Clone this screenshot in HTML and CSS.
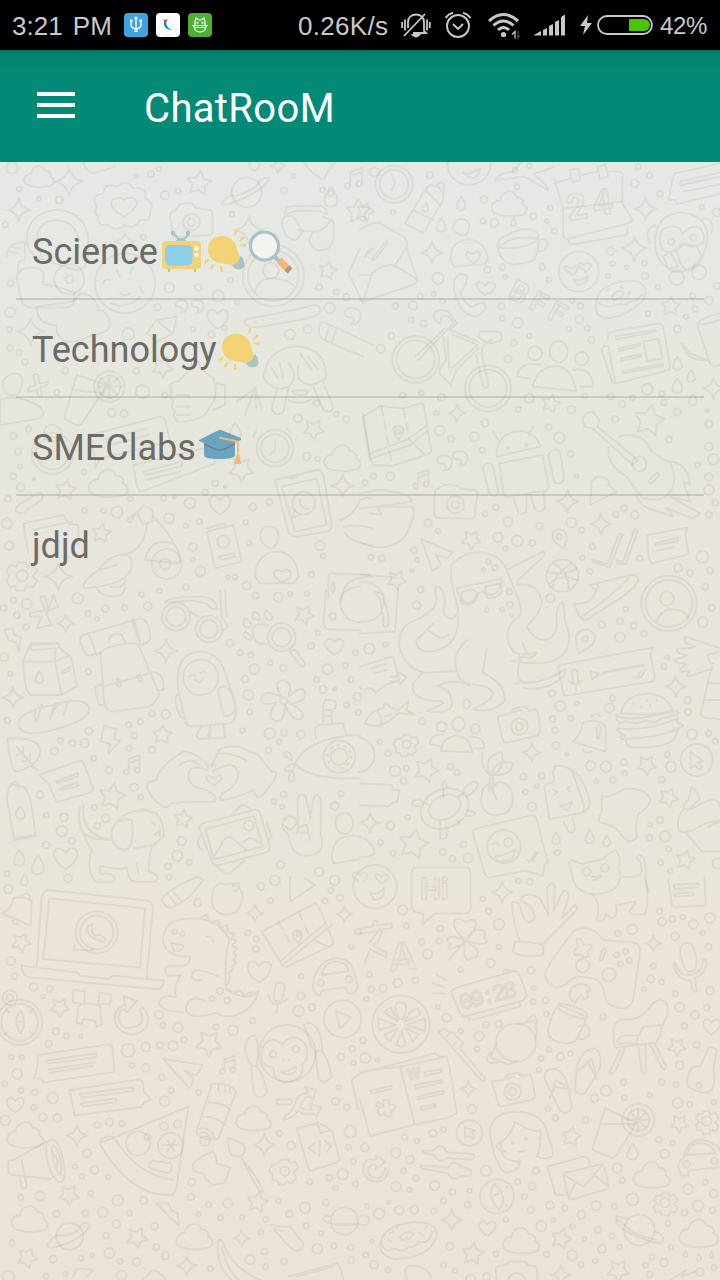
FILE: index.html
```html
<!DOCTYPE html>
<html lang="en">
<head>
<meta charset="utf-8">
<title>ChatRooM</title>
<link rel="stylesheet" href="styles.css">
</head>
<body>
<svg class="defs" width="0" height="0" aria-hidden="true">
  <symbol id="bulb" viewBox="0 0 44 44">
    <g fill="#f3d375">
      <path d="M4 19C4 11 10 6 18 6c9 0 14 6 15 13 1 5 3 7 3 10-2 5-6 7-9 6-4-1-7-2-11-2C9 32 4 26 4 19Z"/>
      <path d="m31 0 3 1-3 5-1-1ZM39 6l2 2-5 4-1-1ZM42 14v3l-6-1v-1ZM0 31l5-2v2l-4 3ZM8 34l3 1-4 5-1-2ZM16 36h2l1 6h-3Z"/>
    </g>
    <path fill="#a9c2c6" d="M36 26c0 5-5 9-8 9 2 4 5 5 9 4 3-1 4-4 3-6 0-3-1-6-4-7Z"/>
  </symbol>
  <symbol id="tv" viewBox="0 0 44 44">
    <path d="m14 4 7 8 8-8M9 38v4M35 38v4" fill="none" stroke="#a9c2c6" stroke-width="2"/>
    <path d="M16 11c1-4 9-4 10 0Z" fill="#a9c2c6"/>
    <circle cx="13" cy="3" r="2.2" fill="#a9c2c6"/><circle cx="28" cy="3" r="2.2" fill="#a9c2c6"/>
    <rect x="2" y="11" width="39" height="28" rx="4" fill="#f3d375"/>
    <rect x="5" y="15" width="27.500" height="20.500" rx="5" fill="#8bd0e6"/>
    <circle cx="36.500" cy="18.500" r="2.400" fill="#f5f3e6"/><circle cx="36.500" cy="25" r="2.400" fill="#f5f3e6"/>
  </symbol>
  <symbol id="lens" viewBox="0 0 44 44">
    <path d="m26 26 6 6" stroke="#a9c2c6" stroke-width="4"/>
    <circle cx="16.500" cy="16" r="14" fill="#f3f3f0" stroke="#a9c2c6" stroke-width="3"/>
    <path d="m31 30 10 10" stroke="#f3b77c" stroke-width="7"/>
    <path d="m39 38 3 3" stroke="#b89488" stroke-width="7"/>
  </symbol>
  <symbol id="cap" viewBox="0 0 44 44">
    <path d="M6 15h31v14c0 3-6 4-15.500 4S6 32 6 29Z" fill="#6ba4c0"/>
    <path d="M1 14 21 4q1-.5 2 0l20 8v2L23 23q-1.500.5-3 0L1 15Z" fill="#6ba4c0"/>
    <path d="M6 18c7 2 10 7 16 6 6 0 9-4 15-6" fill="none" stroke="#777e80" stroke-width="1.500"/>
    <path d="m21 11.500 19 4V31" fill="none" stroke="#f3b77c" stroke-width="1.800"/>
    <path d="m38.500 29 3 0 1.500 9h-7Z" fill="#f3b77c"/>
  </symbol>
</svg>

<div class="screen">
  <header class="status">
    <span class="clock">3:21 PM</span>
    <svg class="badge" viewBox="0 0 24 24"><rect width="24" height="24" rx="4" fill="#3fa5df"/><path d="M12 5v13M7 8v4q0 3 5 4 5-1 5-4V8" fill="none" stroke="#fff" stroke-width="1.300"/><path d="m12 3 2 3h-4Z" fill="#fff"/><path d="M6 6.500h2.500V9H6ZM15.500 6.500H18V9h-2.500ZM10.500 17h3v2h-3Z" fill="#fff"/></svg>
    <svg class="badge" viewBox="0 0 24 24"><rect width="24" height="24" rx="4" fill="#fff"/><path d="M3 13a9 9 0 0 0 18 1" fill="none" stroke="#cfd3da" stroke-width="1" stroke-dasharray="1 1"/><path d="M13 6c-4 1-4 8 3 11-7 0-10-6-7-10Z" fill="#1683d0"/><path d="M7 6.500 11 7 9 9.500Z" fill="#e33"/></svg>
    <svg class="badge" viewBox="0 0 24 24"><rect width="24" height="24" rx="4" fill="#4fae36"/><g fill="none" stroke="#fff" stroke-width="1.200"><path d="M7 12V8L8 5l3 2h2l3-2 1 3v4M5 12.500h14l-1.500 2h-11ZM6.500 14.500c0 6 11 6 11 0"/></g><path d="M8.500 9h2v1.500h-2ZM13.500 9h2v1.500h-2Z" fill="#fff"/></svg>
    <span class="speed">0.26K/s</span>
    <svg class="mute" viewBox="0 0 30 28" fill="none" stroke="#c9c9c9" stroke-width="1.800"><path d="M7 17V11c0-10 16-10 16 0v9l2 2H12M3 25 24 3M1.200 11v6M4 8.500v11M26 8.500v11M28.800 11v6"/><path d="M12 24h6q-3 3-6 0Z" fill="#c9c9c9"/></svg>
    <svg class="alarm" viewBox="0 0 28 28" fill="none" stroke="#c9c9c9" stroke-width="1.900"><circle cx="14" cy="15" r="11"/><path d="m9 13 5 5 5-5M1.500 7Q4 3 9 1.800M26.500 7Q24 3 19 1.800"/></svg>
    <svg class="wifi" viewBox="0 0 34 28" fill="none" stroke="#c9c9c9" stroke-width="3"><path d="M2 10q14-13 29 0M6.500 14.500q10-9 20 0M11 19q5.500-5 11 0"/><circle cx="16.500" cy="23.500" r="2.600" fill="#c9c9c9" stroke="none"/><path d="m25 23.500 3-3v7" stroke-width="1.300"/><path d="M31 20v7l2-3" stroke="#444" stroke-width="1.300"/></svg>
    <svg class="signal" viewBox="0 0 32 22" fill="#c9c9c9"><path d="M0 21 7 17v4.500H0ZM9 16l4-2v7.500H9ZM15 12l4-2v11.500h-4ZM21 8l4-2v15.500h-4ZM27 3l4-2.500v21h-4Z"/></svg>
    <svg class="bolt" viewBox="0 0 12 22" fill="#c9c9c9"><path d="M8 1 0 12h5L3 21l9-12H7Z"/></svg>
    <svg class="battery" viewBox="0 0 56 20"><rect x="1" y="1" width="54" height="18" rx="9" fill="none" stroke="#c9c9c9" stroke-width="1.800"/><path d="M32 4h15a6 6 0 0 1 0 12H32Z" fill="#4ac600"/></svg>
    <span class="percent">42%</span>
  </header>

  <div class="toolbar">
    <svg class="menu" viewBox="0 0 38 26"><path d="M0 2h38M0 13h38M0 24h38" stroke="#fff" stroke-width="4"/></svg>
    <h1 class="title">ChatRooM</h1>
  </div>

  <main class="content">
    <svg class="wallpaper" viewBox="0 160 720 1120" aria-hidden="true">
      <g id="nw" transform="translate(0 160) scale(.33333)">
        <path d="M290 140q-20-35 20-40 5-35 40-20 30-25 50 5 45-5 35 30 30 15 15 40 5 30-30 25-15 30-45 15-30 25-50 0-35 5-30-25-15-10-5-30ZM372 170q-50-30-35-50 20-15 35 0 20-15 37 0 10 20-37 50Z"/>
        <path d="M510 165q0-10 15-13l15-20 35-3 12 15 40 5q10 0 10 12v55q0 10-12 10l-98 5q-10 0-10-12Z"/><circle cx="574" cy="187" r="25"/><circle cx="574" cy="187" r="11"/>
        <circle cx="740" cy="97" r="45"/><path d="M695 105c-60 35-20 40 45 5 65-30 90-75 40-50-5 25-70 55-85 45Z"/>
        <path d="M80 240c0-120 180-120 185 0v50q-5 40-40 40l-90-30q-50-10-55-60ZM125 290q-40-100 40-110 80 5 70 90M20 290q0-45 55-42v50q-25 5-20 25l-5 30 15 70q5 20 40 20l90 0q20 0 25-15l5-30-60-20-35-5 0-30q0-20-40-20-30 0-40 25M25 275l30 5M35 260l25 5"/>
        <circle cx="208" cy="358" r="45"/><circle cx="208" cy="358" r="12"/>
        <path d="M110 440q0 55 60 55-5 50 50 50 30-5 55-20 60-5 55-40-10-35-35-35-10-50-55-50l-20 25Z"/>
        <circle cx="375" cy="370" r="90"/><path d="M310 370q5-15 20-10M350 330l10 20M390 340l10-20M420 380l10 20M360 400q15 10 30 0M330 430q50 20 90-20"/>
        <circle cx="820" cy="347" r="92"/><circle cx="820" cy="347" r="76"/><circle cx="813" cy="332" r="24"/><path d="M765 395q10-40 50-40 40 0 65 20"/>
        <path d="M860 140q45-5 105-2 20 10 15 25-15-15-95-10l-30 10ZM970 170l30 15 0 50q-5 40-50 35-35-20-10-55 35 0 55-40M845 185q5-25 35-15l20 30q10 30-15 40-35-5-40-55ZM895 210l40 5"/>
        <path d="M900-10q30 50 70 70 20-40 50-70M250 0q0 35 35 40l60-20M745 475q80-10 195-40 20 0 20 15 0 20-60 30l-130 22q-35 2-35-17 0-10 10-10ZM765 485h2M790 480h2M820 476h2M845 471h2"/>
        <path d="M530 470l-10 50-50 25-30-25 30-40ZM470 480l40 35M960 490q10-5 20 0l140 65M960 490q-10 35 10 50l120 50M990 495l-15 45M1010 505l-15 45"/>
        <path d="M230 645 320 675 250 785Q240 800 230 795L200 780Q190 775 195 765ZM215 690l100 10"/><circle cx="328" cy="680" r="46"/><circle cx="328" cy="680" r="34"/><path d="M328 646v68M294 680h68M304 656l48 48M352 656l-48 48"/>
        <path d="M515 705q-15-40 20-40l40-40v-25q25-5 25 25l40 30q10 20 5 60l-30 50q-30 20-80 20-20-15-10-30-15-15-5-30-15-15-5-40ZM530 705h40M530 740h40M530 765h40M650 670l25 5v60l-35 15M710 725l55-40 20 60M765 685l-30 80M765 685l5 60"/>
        <path d="M805 670q-25-20-10-35 10-60 80-75 70-5 95 45 15 30 0 65M805 670q20 20 45 15 40-10 30-55l-15-20M815 625l20 30M840 610l10 45M895 620q-10 50 40 55 35-10 45-30M900 580l35 50M925 590l30 40M830 690l-15 55q10 30 35 10l15-70M940 680l30 70q25 15 30-10l-25-60M865 720q30 20 75-5M875 695q25-10 50 0-15 20-50 0Z"/>
        <path d="M0 720q55-20 120 20 20 25 0 35L0 795ZM40 640q-45 15-25 55 15 20 40 5 30-60-15-60ZM100 645q10-8 18 5l0 20 25-5q5 12-22 18l5 25q-12 10-15-18l-25 5q-10-12 20-20Z"/>
        <path d="M270 825 480 770q15 0 18 20l12 55-210 50-15 30 0-30ZM310 840l130-35M315 860l130-35M400 915l210-50q25 0 30 25l5 20-220 85q-10 0-15-20ZM430 935l115-30q5 10-5 15L435 945ZM440 960l100-25"/>
        <circle cx="157" cy="880" r="62"/><circle cx="157" cy="880" r="48"/><circle cx="157" cy="820" r="26"/><circle cx="825" cy="865" r="55"/><circle cx="825" cy="865" r="42"/><path d="M825 840v30l-15 15M760 830l10-20M860 805l10 10"/>
        <path d="M825 960 950 930Q965 930 970 945L995 1095Q995 1110 980 1115L890 1130Q870 1130 865 1115L830 980ZM845 980l105-25 30 140-95 20ZM870 955l25-5"/><circle cx="911" cy="1030" r="34"/><path d="M885 1050l-8 25 25-13M900 1018q-5 25 25 30"/>
        <path d="m50 1040 60-40q25-5 15 20l-55 38q-30 5-20-18ZM70 1090 190 1065l15 25 30 5 0 60M70 1090l15 90M95 1110l120-25"/>
        <path d="M380 1080 430 1040q40 0 25 45l-25 8-20-35-20 30ZM440 1090q0 60-50 90-60 0-95 50-60 45-40 55 130-10 140-65 5-40-30-35M460 1070q50 50 60 80-70-20-85 50l105 10q0-40-20-60M300 1230l50-15M330 1280q50 10 45-30"/><circle cx="500" cy="1212" r="45"/><circle cx="495" cy="1212" r="16"/>
        <path d="m620 1115 80-20 25 110-80 20ZM620 1105l50-15 10 10"/><circle cx="670" cy="1145" r="18"/><path d="m655 1190 45-10 5 10-40 10Z"/>
        <path d="M765 1250c0-100 130-100 130 0l-15 20h-100ZM845 1268c-40-25-20-50 0-32 20-20 50 10 0 32ZM780 1130q0-30 28-30 30 0 28 35-15 50-45 15-10-10-11-20Z"/>
        <circle cx="67" cy="1247" r="17"/><path d="m55 1208 25 0 3 17 15-10 15 20-15 15 15 12-15 20-20-5-5 15h-25l-3-15-15 5-12-20 12-15-12-12 12-20 20 5Z"/>
        <path d="M985 1320V1250q0-10 10-10l115 5M1000 1265l5 20-5 15-5-15ZM1115 1250q-90 0-90 70"/>
        <path d="M1045 340l35-75M1045 340l45 90M1020 1080q45-15 60-60 20-10 35-5M1030 1100q40-10 90 5M1035 1120q20 30 80 35M1090 760l20 140"/>
      </g>
      <g id="ne" transform="translate(360 160) scale(.33333)">
        <circle cx="102" cy="73" r="56"/><circle cx="102" cy="73" r="43"/><path d="M95 45l10 25-10 20"/>
        <path d="m135 190 60-100 15-15 25 5 15 20 0 20-60 100ZM160 150l60 30M195 90l45 45M200 130q-25 15-5 25 15 0 5-25M230 80q5-20 22-8v25"/>
        <circle cx="327" cy="10" r="65"/><path d="M310 38q25 10 50-15-5 40-35 27ZM405 60q20-25 55-25l30-35M405 60l90-10 70 42q5-10-45-50l60-20"/>
        <path d="M583 70 630 55M662 45l50-10M742 35h40q10 5 5 20v75l30 50-10 10-185 47q-12 0-12-15l-2-80-25-87M610 145l180-20M625 240l5 15 170-30 3-20M630 30l25-5 7 35-25 7ZM712 20l25-5 7 35-25 7Z"/>
        <text x="625" y="182" font-size="108" textLength="140" transform="rotate(-9 625 182)">24</text>
        <path d="M925 120l15-70q0-10 15-12L1080 10M925 120l20 0 5 12 130-30M960 65l120-28M970 95l110-22M960 65q-3 10 5 10l115-25"/>
        <path d="M412 255q0-25 75-48 60 0 45 30-20 25-90 28-25 0-30-10Zm0 0q5 50 50 60l50-10q20-5 25-65M535 245q15-15 28 0 0 30-30 30M425 255q30-30 110-20"/>
        <circle cx="656" cy="335" r="60"/><path d="M638 345c-45-25-20-35-5-20 15-15 30 5 5 20ZM678 335c-40-25-20-30-5-20 15-15 35 0 5 20ZM640 358q30 5 45-10-5 30-35 25Z"/>
        <path d="M885 250q0-90 80-92 70 5 78 65 0 65-50 100-40 25-70 0-38-25-38-73ZM898 240q0-40 40-40 30 0 28 25 25-35 55-20 20 25 5 45-30 20-60 0-30 40-58 20ZM950 270l25-20 35 10 15 30q-10 40-45 40-20-10-30-60ZM910 290l20-15 25 45-30 5Z"/><circle cx="950" cy="353" r="22"/><circle cx="1017" cy="337" r="22"/><circle cx="933" cy="245" r="9"/><circle cx="1000" cy="233" r="9"/><path d="M1030 175q35 0 25 45M885 195q-35 15-15 55"/>
        <path d="M273 300q-5-55 50-62 55 5 60 60-5 20-30 16l-70 6ZM340 310c-35-25-20-45-5-28 30-20 35 10 5 28ZM280 205q0-25 22-28 30 0 25 30-10 30-30 15-15-5-17-17"/>
        <path d="M0 210q30-25 60-20l70 40q15 10 10 35l33 95q-5 15-30 20L10 425 0 420M0 345h35q10-25 60-30 30 10 77 45M35 345 10 425M105 315l35-55M17 285q10-20 25-20L15 290ZM35 300l45-60q5 5-2 15L45 300Z"/>
        <path d="M283 360q10-25 35-15 10 20-15 50 0 25 30 45l35-12q25 15-15 40-40 5-60-45-15-35-10-63ZM375 405c-50-35-15-50 0-28 25-30 55 10 0 28Z"/>
        <text x="440" y="410" font-size="85" textLength="180" transform="rotate(28 440 410)">BFF</text>
        <path d="M708 430q5-60 100-68 70 5 40 60-50 50-110 53-35-5-30-45Zm0-10q25 30 60 15 15-5 30 0 10-15 30-10 10-20 20-20M755 410q10-20 35-15 5 20-30 25ZM740 390l10-5M780 380l10 5M810 395l-5 10"/>
        <circle cx="167" cy="598" r="70"/><circle cx="167" cy="598" r="57"/><circle cx="384" cy="685" r="69"/><circle cx="384" cy="685" r="56"/>
        <path d="M175 600 280 490q-15-30-35-20l-5 20q-25-10-15-35 20-10 40 0l25 35-20 20 85 35M262 530l5 90q10 10 25-10l60-55-75-32M250 530l8 70-15 20q-10 20 5 30l25 25M165 590l90-85M360 515h55q15 10 10 25-30 15-50 5l-20-15ZM395 540q-30 10-30 40l20 95q-5 15-15 5l-22-95M355 565l-65 65-15 35"/>
        <circle cx="525" cy="580" r="21"/><ellipse cx="596" cy="575" rx="27" ry="32"/><circle cx="665" cy="596" r="20"/><path d="M518 680q15-60 70-62 50 5 60 75ZM540 615q-60-15-70 35l40 5M640 630q55-10 60 50h-40"/>
        <path d="M745 535q-5-15 10-20l140-25q10 0 15 10l20 120q0 10-10 12L770 670q-12 3-15-10l-30-90q0-15 20-12l20 105M765 530l120-20 5 5-120 23ZM775 565l65-15v8l-62 15ZM782 595l60-13v8l-60 13ZM850 545l45-10 12 60-45 8ZM785 635l125-25v7L790 640Z"/>
        <path d="M1010 490q20-20 70-30M1010 490q20 10 70-10M1010 490l40 120 10 10 20-5M965 550l25 30 50 20q-60 5-75-50"/>
        <path d="m10 770 50-32 70 7 50-15q10 0 12 10l22 135-10 8-110 35-55-3q-5 0-30-140ZM30 880l110-40 55-40M35 895l115-40 50-40M145 835l50 50"/><path stroke-dasharray="9 6" d="M65 740l30 170M130 745l18 90"/><circle cx="115" cy="815" r="7"/><path d="M115 840q-30-40 0-43 30 3 0 43Z"/>
        <path d="M410 890q-5-55 50-75 60-10 82 45ZM418 845l-18-30M505 830l15-32M418 910 548 885l18 95q0 10-10 12L445 1010q-12 0-15-10ZM368 925q10-25 30-10l17 80q-10 25-27 5ZM565 885q15-25 35-10l12 80q-10 25-30 10ZM460 1010l15 50q20 5 25-10v-45M510 1000l15 50q20 10 30-5l-5-55"/><circle cx="443" cy="864" r="3"/><circle cx="499" cy="854" r="3"/>
        <path d="M668 780q5-25 30-25l20 25-5 20 120 100-15 15-120-110-25-5ZM775 830q70-20 100 43 20 20 55 35 30 60-10 100-30 20-75 5-30-40-45-65-60-30-55-85M930 905q35 0 55 40l5 30-20-10 20 60-60-15 90 50-20 15-80-30 20 25-60-20q-40-10-50-40M865 965l25-27q10 5 5 12l-20 20Z"/><circle cx="838" cy="911" r="22"/>
        <path d="M690 1035l5-70q10-12 20-15 40 5 30 25l25 20ZM225 995q0-8 12-10l15-10q40-5 50 12l40 3q10 0 10 12l-7 60q0 15-12 14l-98-3q-12 0-12-12ZM0 1000l50-10q105 5 105 35L50 1040 0 1045M50 1040l110 0v40M30 1060l35 5-10-20"/><circle cx="286" cy="1034" r="26"/><circle cx="286" cy="1034" r="11"/>
      </g>
      <g id="e" transform="translate(360 520) scale(.33333)">
        <path d="M155 0Q140 80 60 82 20 80 0 65M183 57l95 40-15 18-35-10 15 30-25 18ZM577 50q0-25 25-22 20 5 18 30l-8 28q-35-20-35-36ZM697 118l45 15L778 40l10 5-40 98-50-18ZM770 120l20 5 33-98 10 5-35 100-28-3ZM862 45l120-22-6 20 10 60-110 27q-10-10-12-30ZM885 70l70-18q0 10-5 12l-65 12ZM892 92l50-12"/>
        <circle cx="597" cy="50" r="8"/><circle cx="607" cy="167" r="48"/><path d="M560 155q50 15 90-10M580 130q50 30 45 75M635 130q-60 40-55 70M570 190q30-30 85-10"/>
        <path d="M295 270Q260 140 280 130 310 95 370 97 420 105 440 150L550 95q10 0 0 15L475 180v15M440 150l30 75q25 60 0 70-50 40-10 100l20 8q40 0 50-5-5 15-25 15-40-5-25 0-20 80 25 75 50 0 110-40 10 20-50 50-50 15-75 5M295 270q-5 25-25 25-30-10-15-50-5-50-30-45l5 45q-10 35-75 60-40 20-37 75 20 70 80 78l90-5M295 290q0 100-90 105-40-5-35-35l50-50M470 195q65-10 75 50 0 30-45 75 20 40 55 40 40-10 35-65 0-45 20-50l5 60q25 50 0 90-30 50-160 28M320 360q-40 40-33 70 0 60 50 63 60 5 62 30-5 20-60 45 60 15 95-25 5-50-65-85l10-70M190 458q-40 30-30 55 10 30 80 30 15 5 5 10l-45 20q65 10 75-15 5-50-45-60 50-25 100 0M205 330q35 35 60 15M460 490q30 0 65-5M490 370q5 30 20 35"/>
        <path d="M290 205 425 175v40q-10 20-40 20l-15-20-15 5q-10 45-50 30ZM305 217q30-15 45 0-5 35-30 32-20-5-15-32ZM375 200l45-10q0 30-25 35-20 0-20-25Z"/>
        <path d="M690 195 815 165q20 0 20 15-5 20-55 55L675 302l-18-15-15-35q60 0 65-40ZM665 290q90-60 145-120M715 190q0 15-10 30"/>
        <circle cx="927" cy="250" r="83"/><circle cx="927" cy="250" r="70"/><circle cx="921" cy="236" r="21"/><path d="M890 305q15-40 50-37 30 0 45 25"/>
        <path d="M647 350q10-25 40-20 20 10 17 30-5 20-50 40ZM600 435l280-53-8 20 12 70q0 10-10 13L620 527q-8 0-10-8l-15-70q0-12 5-14ZM730 457l120-23v3l-120 22ZM690 452l27 10-20 17ZM635 455q10-10 17 0l3 30q-10 15-17 0ZM625 480q25 30 40 0M648 500v10M820 470l10 3 13-20M835 470l8 3 12-22"/><circle cx="676" cy="356" r="8"/>
        <path d="M1080 385 975 350q-5 10 5 20l25 10q0 5-50 5-10 10 5 15l20 5q-10 10-30 10-10 10 0 12l30 5-20 15q0 10 10 8l20-3q-15 12-5 18l75-25M1060 430q-15 0-17-25l37-10M1055 440 1022 580q0 10 15 13l43 5M1045 490h35M1030 540h50"/>
        <path d="M783 580q10-60 90-60 50 10 65 50-40 15-80 13-40 0-75-3M770 585q15 15 80 8l100-20q15 5-5 12l-40 10-20 12-30-5-25 8-35-5-15 5-10-10ZM770 625q90 10 185-30l-5 10 20 12-15 10q-70 30-170 30-15-10 10-10l-20-12ZM795 655q5 30 30 28 100 0 120-30l10-30M820 550v3M845 560v3M870 555v3M860 540v3M890 540v3"/>
        <path d="M412 590l40-10 10-15 35-5 10 12 20-5q10 5 13 65 0 15-12 16l-88 20q-10 0-12-12ZM455 578l30-8"/><circle cx="478" cy="620" r="25"/><circle cx="478" cy="620" r="11"/>
        <circle cx="245" cy="620" r="15"/><ellipse cx="295" cy="612" rx="19" ry="21"/><circle cx="346" cy="626" r="14"/><path d="M243 693q5-45 50-46 35 5 45 50ZM250 643q-40 0-40 30l30 5M330 650q45 0 43 35h-30"/>
        <path d="M15 610q15-40 55-45l5-18 15 15 25 10 30-30-5 30 25 12-50-5q-50 55-100 31ZM50 570q20 20 10 50M75 590l20-8"/><path d="m0 440 95-30q5 0 7 8l15 62q0 5-25 10-25 5-45 30-10-20-25-15-20 10-22-5M35 445l45-15M40 460l40-10M92 470h20l5-13 22 15-20 20-5-10-20 3"/>
        <path d="M0 163l110 10M115 205l-10 130-105 5M0 185q70 0 72 65-10 60-72 55M70 220l15 70v25q-5 10-15 0v-20l-10-60-20-20Z"/><path d="M-5 650q50 15 48 60-5 40-48 48"/>
        <circle cx="140" cy="673" r="12"/><path d="m130 645 20-2 3 10 15-3 8 18-12 10 6 15-14 12-12-5-4 10h-16l-3-10-14-3 2-14-10-10 8-14 14-2Z"/>
        <path d="M637 665q25-15 30-55 45-20 70 10v75ZM670 690q10 15 25 5M710 620q10-10 12 5l-3 30h-8ZM695 590q15-18 27 0"/><circle cx="1010" cy="720" r="48"/><path d="M992 695v50l12-10 15 15 7-7-12-15 15-5Z"/>
        <path d="M367 700q-5 50 25 65l-5 50M390 765q-25-55 35-70 10 60-30 70 10-50 64-35-5 40-60 35v45M385 790q15 25 25 48M395 792q-30 0-32 50 5 43 45 43 50 0 51-50-5-50-45-48l-15 15"/>
        <path d="M553 800q10-15 25-12 10-15 0-25l5-25q40-5 55 20l35 100-5 20-100 20ZM610 740q60 10 80 110 0 20-30 30M610 905l15 30q15 8 20-5l-7-38M600 855q20 0 35-10-5 30-25 22ZM580 810l12 5-8 8M630 800l-10 8 12 8"/>
        <path d="M725 825q10 15 70-18 60-5 75 30 0 25-35 45-10 30-5 70-20 25-45-5-15-30-65-40-10-10 5-30ZM0 790l95 5 5 15 18 0-5 35-18 5-10 10-85-5"/>
        <ellipse cx="254" cy="866" rx="74" ry="58" transform="rotate(-25 254 866)"/><ellipse cx="254" cy="862" rx="50" ry="35" transform="rotate(-25 254 862)"/><path d="m250 808 0 25M295 830l20-15M185 845l20 10M290 900l10 10M240 925l0-20M310 810q25-35 45-20-5 25-35 40M185 840q-30-5-30 15l25 5M240 925v30q10 5 20-5l3-25M320 870l25 8q0 12-25 10M248 805q0-30 10-20l3 18"/>
        <path d="M340 945q-5-15 10-20l160-38q15-3 20 10l33 130q-15 10-10 20l-5 20-50-15-105 20q-15 3-20-15Z"/><circle cx="432" cy="980" r="50"/><circle cx="445" cy="967" r="13"/><path d="M398 972q15-10 20 5M405 1010q35-5 60-22 0 35-30 35-25 5-30-13ZM500 1020l10 5 15-28M518 1022l15-25"/>
        <path d="M635 1060q-15-45 0-40l30 12 65-15q20-25 40-25 15 30 5 50 25 70-60 80-70 5-80-62ZM785 1070q55 5 60-15 0-35-15-40 10-25 25 10 5 50 0 50l10 40"/><circle cx="680" cy="1055" r="12"/><circle cx="735" cy="1043" r="12"/><path d="M695 1070h30M700 1080q20 0 20-15"/>
        <path d="M970 860q10-15 15-20l10-40q20 20 25 38l-30 25M970 860q0 10 20 8l60-30q30 0 30 20M970 870q-20 20-15 60 20 20 80-20l45-10M980 940l45 55h55M1045 920l35-15"/>
        <path d="M0 950q35 10 45 50-20 15-45 10"/>
      </g>
      <g id="w" transform="translate(0 590) scale(.33333)">
        <path d="m120 20 15 0 10 40 15-45 15 35-35 15 0 10 15 30-45 10 15-35-35 0v-10l45-10ZM240 155q-5-15 10-20l170-50q25 0 32 60-5 15-30 20M240 155l15 35q5 10 20 5l25-5M265 130l25 65M395 90l25 70M325 155q5-30 40-20l10 20M400 85l20 70"/>
        <path d="M302 185q35-25 105-25 15 10 40 80l30 70q0 20-30 40l-110 15q-20-5-25-30ZM308 290l140-40M352 265q12 0 10 25-15 5-10-25ZM412 255q12-5 15 18-10 10-15-18ZM450 245q45 0 40 55l-20 0M308 285q-30 0-20 25l10 35h20"/>
        <path d="m68 215 22-50 85-5 5 15 35 30 15 85-45 25-95 0-12-20ZM68 215l95 0 5-40-75 5v-20h78M165 215l45-20M165 215l20 100M118 243q25 40-5 35-15-5 5-35ZM185 245l25-15v10l-22 12Z"/>
        <path d="M535 300q-15-115 70-115 60 5 75 80l20 50q20 80-10 85L575 410q-15 0-20-20ZM655 310q0-25 25-20 20 15 25 70-15 25-35 15ZM535 310q-20 20 10 75h15M605 405l-15 30q0 12 15 12l25-2v-35l-5 30 5 5 45-3-5-40"/><circle cx="602" cy="262" r="53"/><path d="M568 260q10-10 20 0M600 250q10-10 20 0M585 268q12 18 25 0"/>
        <circle cx="528" cy="80" r="42"/><circle cx="528" cy="80" r="29"/><circle cx="627" cy="117" r="40"/><circle cx="627" cy="117" r="27"/><path d="M495 40q0-20 110-20 45 5 45 35-10 10-30-15l-45-8-80 5M660 0l5 80 20 30-15 10M675 0l5 80M570 65l25 15"/>
        <circle cx="845" cy="142" r="42"/><circle cx="845" cy="142" r="28"/><path d="M805 105q-50-10-45 20 0 40 35 38M870 185q10-10 20 0l25 35q0 15-15 5ZM733 85q25 10 20 25-30 10-20-25M762 65q20 5 18 25-35 0-18-25M800 62q25 15 12 28-30-5-12-28M735 125q20 10 20 25-35-5-20-25M978 0l-8 95q0 20 15 22l95 5M1080-10q-60 5-60 50 10 55 60 57"/>
        <path d="M845 320q-30-45 5-50 30 5 15 50 45-40 50-10 0 30-45 30 50 25 35 45-25 15-50-40 0 55-30 47-30-10 5-55-50 15-45-15 10-25 60-2Z"/><circle cx="852" cy="333" r="11"/>
        <path d="M55 400q0-25 60-45l85-20q60-10 68 20 5 30-90 60-120 35-123-15ZM108 395q-15-40 20-45M150 385l15-45q10-5 15 5M190 375l15-40M110 395l15-50M150 385l25-45"/>
        <path d="M22 445q90-5 100 35-5 50-75 65-15-10-25-100ZM50 470l60 70M50 495l20-5-2-20M65 515l25-5 0-20M95 530l20 10M312 407l38 10-8 30 18 5-35 40 5-30-27-8ZM12 120l25-5 5 20 20 5-5 45-10-28-20-5Z"/>
        <path d="m118 555 120-43q10 0 13 8l28 75q0 10-8 12l-95 28q-8 0-10-8l-20-45ZM168 575l65-25q5 5 0 10l-62 20ZM178 597l55-20q5 5-2 12l-48 12Z"/>
        <path d="M20 625q5-40 20-42l35 10 15 30 18 115-65 12ZM60 648q30 35 0 40-25-10 0-40ZM35 585q0-15 20-5v12M40 745l68-10"/>
        <path d="M440 590q0-15 30-20 5-40 80-85 30 0 65 30 15 15 5 25-50-20-55 15 0 30 35 40 50 10 45 40l-80 0-50 5-15 12q-40-10-60-62ZM635 520q20 0 5 25 60-40 75 0 0 40-40 60-20 20-15 25 40 0 100-30 15 40 40 0 50-60 15-55l-40-50-60-25q-60-5-65 25l-15 35ZM540 525q30-25 60 0M655 490q60 0 85 25M642 587c-45-30-15-35 0-22 20-20 35 0 0 22Z"/>
        <path d="M885 520q40-80 195-85M885 520q40 50 195 45M948 445q-10-35 10-40l70-5 10 30M970 395v-50l5-15q45-5 30 25l-10 5 0 38M970 360h25M972 378h23M875 510q-40-20-15-25 20 5 15 25ZM870 525q-30 15-5 20 25-5 15-25ZM870 545q-10 35 10 30 10-15-5-30"/><circle cx="1018" cy="500" r="48"/><circle cx="1018" cy="500" r="25"/><circle cx="1018" cy="500" r="35" stroke-dasharray="1.500 6"/>
        <path d="M240 650q-15 80 40 95l50 5M250 645q-10 90 80 103M335 720q15-40 60-30 10 80-20 90-45-5-40-60ZM355 690q50-45 115-20 25 35 20 70l-30 25-60 10M245 720q20 50 30 60-20 65 15 97h40q15 0 15-15-15-15-45-10v-25q60 15 80 5 5 40 25 43h60q10-10 5-20l-25-12 10-80M465 735l15-15v20M455 695l10 10M410 820l5 30M405 665q30-15 45 0"/>
        <path d="M600 720q-5-15 10-20l150-40q15-5 20 10l30 100q0 15-15 18l-140 38q-15 5-20-15ZM617 717l145-38 27 90-148 40ZM640 805l35-60 15-5 50 40M730 760q20-30 50 0M690 680l35-35q15 0 30 15M650 830l25 20 15 0 45-40M600 740q-15 20 5 40M800 700l15 35-10 20"/><circle cx="746" cy="707" r="15"/>
        <path d="M850 690q10-20 35-5l10 20M895 705l-3-80q10-20 25-5l15 65M930 685l12-65q10-10 20 5v110q20 60-45 63-45-5-50-60l-20-25q-5-15 15-30M890 730q0-25 30-25l10 45M895 725q20 10 30 0M850 705l20 15 25-20"/>
        <ellipse cx="1033" cy="700" rx="27" ry="32"/><path d="M1080 740q-80-15-85 60l5 20 80-12"/>
        <path d="M290-5q15 25 55 25 30-5 30-30"/>
      </g>
      <g id="sw" transform="translate(0 880) scale(.33333)">
        <path d="M485 60q0-10 60-50l50-20 15 10-40 50-50 32q-15 5-25-8ZM505 45l25 30M520 35l25 30M640 30q15-30 35-15 30-15 50 20 10 25-15 60-35 20-65-5-15-20-5-60ZM700 20q0-15 18-10 0 20-15 25M870-10v75l75-50-30-20M5 100q30-10 35-45 20-10 55 5l-3 77ZM40 120v12h15M65 50q15-20 25 0v12"/>
        <path d="M110 260 125 50q5-18 20-20l285 30q30 0 28 30L440 290M148 55 435 85 420 263 130 237ZM65 257q0 30 25 35l375 35q20 5 28-25l-155-15-10 10-90-10-5-10Z"/><circle cx="290" cy="157" r="63"/><circle cx="290" cy="157" r="50"/><path d="M225 195l-5 15 60 0M262 140q-5 35 50 45l5-10-20-12-10 5q-15-10-10-20l0-15Z"/>
        <path d="M573 230q-80 5-85-55 10-55 60-57 100-15 140 60-15 50-10 150 60 40 97 5-5 50-75 75-35 5-50-10-80 25-93-10 10-50 60-25M573 230l-5 15q-10 15-40 12-50-5-25 30h40q-25 30-15 65l-25-5q-50 20 0 45l45 5M655 290q-75-35-80-5 0 20 30 15M620 170q15-5 20 15M513 190l35 5q10 15-25 20ZM600 115l20-12 12 25 25-8 5 22 20-5 2 20 18 5-8 15 15 5-12 15 15 7-12 15 12 7-12 13 10 8-15 13 5 8-15 12 5 12-5 20M680 325l25 15 15-10 10 15 30-10"/><circle cx="524" cy="155" r="7"/><circle cx="547" cy="162" r="7"/>
        <path d="m785 155 160-85q10 0 53 110v15l-145 68ZM845 240l130-110M855 250l140-115M940 180l45 20M895 190q-30-30-5-40 30 0 5 40Z"/><path stroke-dasharray="9 6" d="M835 125l35 65M895 95l30 65"/><circle cx="895" cy="162" r="6"/>
        <path d="M945 285q25-55 75-50 35 5 45 50l8 35-10 20-18 0-10-18-70 10-5 15q-25-5-20-40ZM965 285q10-45 50-40 30 5 30 30ZM825 320q5-15 20-13l10 10-8 40q-15 15-25 0ZM805 345q10 50 60 10M833 375l-5 25"/><circle cx="962" cy="308" r="10"/><circle cx="1047" cy="298" r="10"/>
        <circle cx="59" cy="427" r="68"/><circle cx="59" cy="427" r="55"/><circle cx="30" cy="353" r="22"/><circle cx="30" cy="353" r="10"/><path d="M62 390q20 40 0 70-25-35 0-70ZM49 425h22M20 390l8 8M90 395l10-8M25 455l-10 8M90 455l10 8"/>
        <path d="m220 330 35 5-2 37-35-5ZM298 338l35 5-2 30-35-3ZM250 370l50 5 5 60-15 5-5-18-35-5-5 15-15-2 5-50ZM375 375q-35 10-30 50 10 35 50 38 50-5 50-50-5-25-20-30l-5 10q10 20 5 35-20 20-50 15-25-15-15-50l15-5 5 10 30-35-40-15Z"/>
        <path d="m112 525 215-32q8 0 10 8l6 70q0 5-6 6l-207 30-8-12-22 0q15-20 12-70ZM138 542l150-22q5 8-2 12l-140 18q-8 0-8-8ZM145 568l140-20M150 578l130-20M208 630l210-32q6 0 10 10l5 30 22 20-23 8-8 15-200 25ZM238 642l160-20q5 8-2 12l-150 18ZM242 670l105-15q5 8-2 12l-97 12Z"/>
        <circle cx="862" cy="520" r="85"/><path d="M785 535q-5-50 35-55 15 0 25 15 20-30 50-20 30 15 25 45 5 20-15 35 10 45-50 52-35-5-35-45-30 0-35-27ZM845 573q25 5 42-15 5 25-25 25-15 0-17-10ZM735 505q5-40 30-38 15 30 5 90-25 10-35-52ZM755 560q0 80 15 90 20 5 30-10-5-50-30-80M912 435q20-15 40 10 15 30 15 65-20 10-30-5ZM945 515l10 80q15 20 38 0 0-40-25-80"/><circle cx="819" cy="523" r="10"/><circle cx="887" cy="508" r="10"/><path d="M850 540v3M867 538v3"/>
        <path d="m490 537 117 17q-5 20-20 32l-35-15 30 25q-10 25-15 28ZM637 610q60 0 72 25L655 775q-20 10-45 0-25-10-18-30ZM625 668q50 0 65 22M610 710q40 0 65 25M600 745q35-5 45 35M655 612v18M675 618v18M690 625v15M600 760q15-10 35 15"/><circle cx="615" cy="783" r="14"/>
        <path d="m300 790 265-110-35 240q-5 30-30 25-110 0-202-155ZM340 770q70 115 180 130M300 785q15-20 35-15"/><circle cx="414" cy="790" r="36"/><circle cx="512" cy="797" r="38"/><circle cx="492" cy="739" r="12"/><circle cx="533" cy="732" r="11"/><circle cx="442" cy="770" r="9"/><path d="M488 795h45M502 780l20 32M525 780l-25 35M448 855q5-20 25-10l40 5q10 35-20 27l-30-8q-20-5-15-14"/>
        <path d="M578 855q10-20 60-40 10 5 12 35l40 12-15 45-35 8q-20-10-30-35-35 0-32-25ZM683 772l45 18q15 20-5 38-30 5-35-15ZM725 835l15 20q35 40 50 80-5 5-10 0l-40-70ZM890 745 955 728 995 750 1018 835q0 8-8 12l-75 25q-8 0-10-8ZM952 730l10 30 30-10M945 790l-20 15 22 15M960 782l-2 45M975 782l18 15-12 18"/>
        <path d="M830 658h40q10 10 0 15h-40ZM855 708q25-10 35-50 15-20 35-20l-10-18 33 10-8 28-15-10q-20 10-25 35 20 10 35 5l-5-18 35 12-15 28-10-10q-30 10-45-10-15 25-45 30ZM25 855q-5-15 15-15l100-55M25 855q-5 25 15 30l115 12M65 840l15 80q-10 10-15 0l-8-35M140 790q10-20 30-5 20 30 24 105-10 30-30 5-30-40-24-105ZM155 800q10-10 20 20 12 30 8 65-15-10-25-50ZM162 825q15 10 8 40"/>
        <circle cx="854" cy="874" r="14"/><path d="m843 840 22-3 4 12 17-4 9 20-14 12 8 15-15 18-14-6-5 10h-18l-4-12-16-3 2-17-12-10 9-18 17-2Z"/>
        <circle cx="209" cy="1069" r="40"/><path d="M170 1065q-50 40-10 38 80-20 110-65-5-15-25-5-20 40-75 32M655 1080l10 0q30 90 130 125M655 1080q-10 80 40 120M665 1100q20 80 60 110M815 1035l25 5 30 0 40 50q0 20-20 23-20-5-50-45l-20-20 30 5M865 1190l145-40q10 0 20 50M890 1190l110-30M220 1190l10-25 50 5-20 20M468 970h37l8 20 20 10 3 35-28-25-15-15ZM1055 600l20-15M1055 600l20 90"/>
        <circle cx="1033" cy="1023" r="41"/><path d="M970 1020q0-20 20-10M970 1020q40 25 110 10M970 1020q5 15 110 10"/><circle cx="1028" cy="417" r="56"/><path d="M1008 393 1055 412 1020 445Z"/>
      </g>
      <g id="se" transform="translate(360 880) scale(.33333)">
        <path d="M155-20v100q0 15 15 17l20 3-3 33 40-33h90q15 0 15-20v-100q0-18-15-18H170q-15 0-15 18"/><path d="M-5 5c-35-25-10-35 5-20 15-18 35 0 10 20M65 10c-35-25-15-35 0-20 15-18 40 0 0 20M30 38q25 10 42-15 5 35-30 37Z"/>
        <circle cx="45" cy="20" r="65"/>
        <text x="180" y="57" font-size="88">Hi</text>
        <path d="M0 145 40 138v-15h12v12l40-5q10 5 0 15L65 148q0 30-25 50l40 20v15l-50-25-15 40M25 190l10-10M35 180 60 145M0 160l45-5"/><text x="90" y="272" font-size="118" transform="rotate(-4 90 272)">A</text>
        <path d="M317 182c-65-60-25-80 0-55 30-20 50 0 0 55ZM317 182c-60-25-65 0-45 10-20 20 10 20 45-10ZM317 182c25-45 70-40 55-10 20 15 5 30-55 10ZM317 182c-15 60 15 70 15 50 30 5 35-20-15-50ZM315 185l-50 55"/>
        <path d="M455 70q5-10 20 0l15 40q15 30 35 5-5-40-45-55 20-30 60-5l25 50-5-80q20-30 25 0l-5 70 30-65q20 5 15 25l-20 60 40-40q15 5-5 25l-90 90-70-5q-20-50-25-115ZM465 185q90 0 85 20v20q-70 10-92-10ZM695 40q30 30 15 80 20 15 30-20 20 30 30-5l-2-20 60-10-20 30q10 15 50 5 10-60 0-100"/>
        <path d="M925 0l10 70q0 10 8 12l95-5-5-85M940 15l75-5q5 5-2 12l-70 5ZM943 40l55-3q5 5-2 10l-50 3Z"/>
        <path d="M555 290q-5-25 90-140 50-20 85 30l65 5q50 0 45 30l-20 145q-15 40-70 15-15-10-20-50-10-30-40-30-40-10-60 5-50 50-75-10ZM650 178q15-10 20 15l22 0q10 12-10 20l3 15q-12 10-20-5l-20 2q-10-12 8-22Z"/><path d="M730 205q10 0 8 5l-12 32q-10 0-8-5Z"/><circle cx="668" cy="257" r="20"/><circle cx="747" cy="284" r="20"/><circle cx="770" cy="225" r="8"/><circle cx="797" cy="214" r="8"/><circle cx="781" cy="252" r="8"/><circle cx="808" cy="241" r="8"/>
        <path d="M960 215q0-25 25-27 20 5 25 60 0 25-22 27-20-5-28-60ZM940 255q15 50 50 45l10 35h10l-5-40q40-20 33-55h-10q0 40-40 45-30 5-43-40Z"/>
        <path d="M275 345q-5-15 15-22l170-50q15 0 20 15l20 55q0 15-15 20l-165 45q-15 5-22-15ZM325 412l3 10 152-42v-10M430 275q10-10 20-2M218 310l33 10M220 340h32M230 285l30 15"/><text class="digits" x="303" y="390" font-size="70" transform="rotate(-14 303 390)" textLength="178">09:28</text>
        <circle cx="123" cy="433" r="86"/><path d="M117 418q-20-40-5-50h20q15 10-3 50ZM135 425q15-40 40-40l5 20ZM140 435l55-20v38ZM135 442l42 22-18 20ZM125 450l12 45q-15 10-27 0ZM113 445l-22 40-18-20ZM108 435l-53 15v-35ZM112 422l-40-25 20-15Z"/>
        <path d="M235 455l20-10 15 15 5-5 35 35-10 15 75 90q0 10-10 8ZM270 460l-10 10M290 485l-10 10"/>
        <ellipse cx="468" cy="488" rx="60" ry="57"/><path d="M470 433l50-10q20 20 5 55M495 428l20-20q20-5 12 40M410 490l-15 35q-20 5 50 28l25-8M395 515q-30 25 0 35l25-5M563 450q15-60 35-75l80 35q0 15-20 50-5 30-40 30-55-5-55-40ZM597 370q50 5 85 30 5 20-20 15-80-20-65-45ZM655 440q30-15 33 15-5 30-38 20M640 320q30-20 50 5 5 15-10 5l5 20-15 10q-5-30-25 10-30-20-5-50Z"/>
        <path d="M760 460q0-40 30-42 50 10 90-50 30-20 43 10v25q-25 45-20 60l-15 25-120 15q-10-10-8-43ZM830 480l20-40 60-5M770 485q10-20 30-18h30M775 490h60M780 510 748 580M795 505l-30 70q-10 10-17 0M835 495l10 80q10 10 12 0l0-85M870 493l35 70q12 15 13-5l-33-65M1045 505q10-10 25 5l-10 60q10 30-5 60-20 20-70-10-10-20 5-50 15-15 30-10Z"/><circle cx="1017" cy="617" r="8"/>
        <path d="M0 580l225-60 15 10 20 0q5 0 30 170-5 10-130 35L30 768 0 660M120 560l45 175M0 575l120-15L260 530M30 632l65-15v10l-60 13ZM195 575l50-7v8l-50 12ZM165 615l80-15v8l-78 18ZM172 650l80-18v8l-78 18ZM182 682l45-10v8l-42 12Z"/><path d="M70 680q-5-22 8-20 12 2 8 15 20-5 20 8-5 12-15 8 10 20-5 20-12 0-12-15-10 15-20 5-5-15 8-18-20-5-12-15 10-5 20 12Z"/><text x="145" y="600" font-size="45" transform="rotate(-9 145 600)">W</text>
        <path d="M395 605l35-5 10-15 35-7 10 10 25-5q5 0 15 62 0 12-10 14l-90 20q-10 0-12-15ZM440 595l25-5"/><circle cx="458" cy="635" r="25"/><circle cx="458" cy="635" r="11"/>
        <path d="M555 600q-5-35 25-33 30 0 45 55l10 60q-10 25-35 10ZM568 655l20-55 45 30-48-10ZM650 565q15-60 55-60 20 10 15 60l-45 75q-25 5-30-10ZM650 575l45-40 15 60-25-45ZM735 685l95 45-60 95q-8 10-18 7l-45-18q-12-5-7-15ZM722 732h105"/><circle cx="835" cy="720" r="48"/><circle cx="835" cy="720" r="33"/><path d="M835 687v66M802 720h66M812 697l46 46M858 697l-46 46"/>
        <path d="M390 760q0-65 85-65 80 5 90 75 20 55 10 60-20 10-45 0 15-30 10-75-45-5-75-30-15 45-40 60-10 60 55 60-5 35-45 32-30-20-45-117M425 785q-25 15-5 25l15 5M540 750q10 15-5 27"/><path d="M475 815q10 5 20-5"/><circle cx="458" cy="788" r="3"/><circle cx="498" cy="775" r="3"/>
        <circle cx="328" cy="759" r="39"/><path d="M315 742v32l10-7 15 10 5-8-12-12 12-5ZM190 812h30q25-30 40 5l80 5q5 15-5 17l-75-5q-20 20-40-10l-30-5ZM183 857l80 5q20-25 40-2l30 10q5 15-10 18h-20q-25 20-40-8l-80-15ZM562 860l110-30q15 0 17 25M562 860l25 85 30 0M610 880l115-28q10 0 20 65 0 10-10 12l-100 30q-10 0-15-25ZM612 885l60 35 55-65M625 950l25-45M740 915l-45-35"/>
        <circle cx="411" cy="949" r="51"/><path d="M403 910q45 45 15 80-40-40-15-80ZM405 945l12-5M380 915v2M440 920v2M378 980h2M440 975v3"/><path d="M45 840q-35-10-35 30 5 35 40 35 35-5 35-35l-10-5q-5 30-25 30-30-5-25-30 10-15 25-10l-5 15 30-25-25-20Z"/>
        <path d="M955 860q0-20 15-25 10-55 55-55 40 5 55 30M955 860l10 30 20-3 0-15 95-10M980 825q10-40 45-35 30 0 40 30Z"/><circle cx="980" cy="852" r="10"/><circle cx="1063" cy="842" r="10"/>
        <path d="m907 938 18 0 3 12 15-7 10 18-12 11 12 10-8 16-16-3-3 12-20 0-4-13-15 3-6-18 12-8-12-10 8-15 16 2Z"/><circle cx="915" cy="968" r="14"/><circle cx="1040" cy="723" r="14"/><path d="m1030 693 18 0 3 12 15-7 10 18-12 11 12 10-8 16-16-3-3 12-20 0-4-13-12 3-6-18 12-8-12-10 8-15 12 2Z"/>
        <circle cx="838" cy="1050" r="46"/><path d="M795 1035q-50-35-10-23l20 5M770 1020q-5 15 40 40 100 45 100 20 0-20-25-25M795 1035q20 30 95 45"/>
        <path d="M62 1085q20-60 120-58 60 5 45 50-20 55-120 60-55-10-45-52Zm3 5q5 30 40 15 30 15 40-5 20 5 30-15 35 10 40-30l10 0M120 1070q15-20 40-10-5 20-35 20ZM90 1060l10-5M110 1045l5-3M180 1060l10 5M195 1045l5-5M85 1080l8 5"/>
        <path d="M410 1200l-3-30q0-10 12-12l20-3 8-10h50l5 10 25 5q5 5 5 40M140 1200l-5-30 10-12q60-5 70 42M0 1010q25-10 28 10-5 20-28 15M930 1200l50-30-15 20 40-15"/><circle cx="470" cy="1205" r="26"/>
      </g>
    </svg>
    <ul class="rooms">
      <li class="room">Science<svg class="emoji first"><use href="#tv"/></svg><svg class="emoji"><use href="#bulb"/></svg><svg class="emoji"><use href="#lens"/></svg></li>
      <li class="room">Technology<svg class="emoji first"><use href="#bulb"/></svg></li>
      <li class="room">SMEClabs<svg class="emoji first"><use href="#cap"/></svg></li>
      <li class="room">jdjd</li>
    </ul>
  </main>
</div>
<script src="wallpaper.js"></script>
</body>
</html>
```

FILE: styles.css
```css
* { box-sizing: border-box; }
body { margin: 0; font-family: Roboto, "Liberation Sans", sans-serif; background: #ebe3d9; }
.defs { display: block; position: absolute; }
.screen { width: 720px; height: 1280px; display: flex; flex-direction: column; overflow: hidden; }

.status {
  height: 50px; flex: none; display: flex; align-items: center; padding: 0 12px;
  background: #000; color: #c9c9c9; white-space: nowrap;
  font: 26px/50px "Liberation Sans", Arial, sans-serif;
}
.status svg { flex: none; display: block; }
.clock { width: 112px; word-spacing: 3px; padding-top: 2px; }
.badge { width: 24px; height: 24px; margin-right: 8px; }
.speed { width: 91px; margin-left: 78px; padding-top: 2px; letter-spacing: .3px; }
.mute { width: 30px; height: 28px; margin-left: 12px; }
.alarm { width: 28px; height: 28px; margin-left: 13px; }
.wifi { width: 34px; height: 28px; margin-left: 15px; }
.signal { width: 32px; height: 22px; margin-left: 13px; }
.bolt { width: 12px; height: 22px; margin-left: 14px; }
.battery { width: 56px; height: 20px; margin-left: 5px; }
.percent { margin-left: 7px; font-size: 24px; padding-top: 2px; letter-spacing: -.3px; }

.toolbar {
  height: 112px; flex: none; display: flex; align-items: center; padding-left: 37px;
  background: linear-gradient(#00705f 0, #02826e 3px, #028a76 22px, #028a76 100%);
}
.menu { width: 38px; height: 26px; margin-bottom: 2px; }
.title { margin: 6px 0 0 69px; font-size: 40px; font-weight: 400; line-height: 48px; letter-spacing: .35px; color: #fff; }

.content {
  flex: 1; display: grid;
  background: linear-gradient(#e5e9e5 0, #e6e8e1 12%, #e6e6dc 22%, #e8e5dc 38%, #e8e5dc 58%, #ebe4da 68%, #ebe3d9 100%);
}
.wallpaper {
  grid-area: 1 / 1; width: 720px; height: 1120px; margin-top: -2px;
  clip-path: inset(2px 0 0 0);
  fill: none; stroke: #777062; stroke-opacity: .1; stroke-width: 1.9px; stroke-linejoin: round; stroke-linecap: round;
}
.wallpaper * { vector-effect: non-scaling-stroke; }
.wallpaper text { font-family: Roboto, sans-serif; font-weight: 700; }
.wallpaper .digits { font-family: "Liberation Mono", monospace; font-weight: 400; }

.rooms { grid-area: 1 / 1; z-index: 1; list-style: none; margin: 0; padding: 40px 16px 0; }
.room {
  height: 98px; padding: 4px 16px 0; display: flex; align-items: center;
  border-bottom: 2px solid rgba(100, 100, 90, .22);
  font-size: 36px; line-height: 44px; color: #6b6b67; white-space: nowrap;
}
.room:last-child { border-bottom-color: transparent; }
.emoji { width: 44px; height: 44px; flex: none; }
.first { margin-left: 2px; }
```

FILE: wallpaper.js
```js
// Small repeated motifs. Each list holds x, y, radius triplets in the group's units.
const NS = "http://www.w3.org/2000/svg";

function star(x, y, r) {
  let d = "";
  const tilt = ((x * 7 + y) % 40) / 60;
  for (let i = 0; i < 10; i++) {
    const a = i * Math.PI / 5 - Math.PI / 2 + tilt;
    const q = i % 2 ? r * 0.52 : r;
    d += (i ? "L" : "M") + (x + q * Math.cos(a)).toFixed(1) + " " + (y + q * Math.sin(a)).toFixed(1);
  }
  return d + "Z";
}
function spark(x, y, r) {
  const k = r * 0.16;
  return `M${x} ${y - r}Q${x + k} ${y - k} ${x + r} ${y}Q${x + k} ${y + k} ${x} ${y + r}Q${x - k} ${y + k} ${x - r} ${y}Q${x - k} ${y - k} ${x} ${y - r}Z`;
}
function ring(x, y, r) {
  return `M${x - r} ${y}a${r} ${r} 0 1 0 ${2 * r} 0a${r} ${r} 0 1 0 ${-2 * r} 0Z`;
}
function heart(x, y, r) {
  return `M${x} ${y + r * .9}C${x - r * 1.8} ${y - r * .2} ${x - r * .7} ${y - r * 1.5} ${x} ${y - r * .45}C${x + r * .7} ${y - r * 1.5} ${x + r * 1.8} ${y - r * .2} ${x} ${y + r * .9}Z`;
}
function cloud(x, y, r) {
  const p = (a, b) => `${x + a * r} ${y + b * r}`;
  return `M${p(-.7, .6)}C${p(-1.3, .4)} ${p(-.9, -.3)} ${p(-.55, -.2)}C${p(-.4, -.85)} ${p(.3, -.85)} ${p(.4, -.4)}C${p(.75, -.4)} ${p(.85, -.1)} ${p(.75, 0)}C${p(1.2, .2)} ${p(1, .65)} ${p(.6, .65)}Q${p(0, .8)} ${p(-.7, .6)}Z`;
}
function drop(x, y, r) {
  return `M${x} ${y - r}C${x + r * 1.2} ${y + r * .5} ${x + r * .5} ${y + r} ${x} ${y + r}C${x - r * .9} ${y + r} ${x - r * .8} ${y + r * .2} ${x} ${y - r}Z`;
}
function note(x, y, r) {
  return `${ring(x - r * .7, y + r * .7, r * .25)}${ring(x + r * .4, y + r * .5, r * .25)}M${x - r * .45} ${y + r * .7}V${y - r * .6}L${x + r * .65} ${y - r}V${y + r * .5}M${x - r * .45} ${y - r * .2}L${x + r * .65} ${y - r * .6}`;
}
function quote(x, y, r) {
  return `M${x - r} ${y - r * .5}C${x - r} ${y - r * 1.3} ${x + r} ${y - r * 1.3} ${x + r} ${y - r * .2}Q${x + r} ${y + r} ${x - r * .2} ${y + r}Q${x + r * .4} ${y + r * .5} ${x} ${y + r * .1}Q${x - r} ${y + r * .1} ${x - r} ${y - r * .5}Z`;
}

const motifs = {
  nw: [
    [star, [597,70,38, 1075,155,38, 983,332,28, 487,622,32, 941,808,32, 724,928,38, 197,990,32, 304,1120,30]],
    [spark, [207,65,42, 56,150,34, 835,18,22, 747,210,42, 92,515,42, 375,245,30, 1028,978,34, 175,1250,42]],
    [heart, [653,477,32, 660,1035,32]], [cloud, [117,50,44, 325,970,58, 1027,895,54]],
    [quote, [545,440,18, 592,440,18, 1058,470,24]], [note, [1065,55,32]], [drop, [992,110,30, 705,815,26]],
    [ring, [36,24,17, 453,42,10, 409,48,6, 58,87,7, 116,117,6, 178,120,11, 477,27,7, 495,106,13, 534,93,8, 696,163,7, 763,16,15, 881,48,6, 852,91,9, 968,89,7, 992,100,8, 16,194,8, 430,231,8, 33,370,9, 508,383,15, 595,382,10, 655,408,17, 691,361,7, 957,382,9, 1009,396,8, 1039,412,10, 30,457,15, 28,508,8, 473,442,10, 711,427,6, 385,522,18, 579,507,7, 635,523,10, 673,503,7, 989,444,16, 923,508,12, 870,523,15, 30,564,9, 57,577,8, 75,606,9, 409,633,9, 170,697,8, 196,632,9, 427,695,20, 494,705,8, 335,758,12, 372,761,11, 894,775,12, 950,729,9, 1009,762,7, 1039,778,10, 40,828,10, 85,807,8, 54,875,10, 60,920,6, 102,958,4, 40,949,9, 62,982,12, 253,936,7, 645,970,9, 675,980,4, 616,997,8, 920,889,12, 953,897,7, 24,1016,9, 391,1018,7, 491,1014,8, 524,1010,5, 570,1029,16, 253,1052,8, 310,1052,7, 351,1056,17, 507,1075,15, 598,1085,8, 557,1097,7, 737,1087,7, 759,1041,11, 808,1026,9, 21,1090,16, 28,1157,13, 579,1162,12, 578,1199,6, 601,1234,15, 747,1150,7, 960,1157,14, 969,1188,7, 934,1244,8, 558,1281,9, 740,1277,12, 705,1251,7, 684,1252,6]]],
  ne: [
    [star, [932,439,30, 867,782,48, 572,731,28, 15,155,28]], [spark, [857,147,34, 823,265,38, 216,278,34, 291,760,26, 623,1025,34, 1060,685,32]],
    [cloud, [448,132,52]], [drop, [303,130,20, 243,195,20, 460,187,12, 952,610,20, 993,648,18, 952,677,22, 998,718,18]],
    [quote, [254,910,22, 300,897,22]], [note, [187,958,28]],
    [ring, [209,45,10, 43,36,14, 99,157,7, 372,118,11, 369,183,8, 403,189,12, 471,80,8, 465,31,7, 508,18,7, 571,143,7, 520,169,9, 561,183,6, 583,213,8, 824,70,12, 835,20,8, 868,46,8, 900,102,9, 1026,142,7, 1070,157,12, 751,274,12, 758,311,7, 853,310,8, 800,322,6, 744,348,6, 855,348,10, 894,382,7, 1070,378,10, 234,355,17, 181,409,8, 221,402,6, 382,329,10, 427,321,9, 436,351,6, 547,321,9, 567,360,7, 248,424,7, 106,438,9, 159,437,13, 153,480,7, 191,491,9, 94,528,9, 62,566,13, 424,439,10, 427,475,8, 473,489,15, 508,527,7, 461,549,9, 444,597,11, 637,422,7, 661,438,9, 658,478,12, 627,507,7, 682,504,8, 694,539,10, 864,461,7, 998,408,8, 1047,421,12, 1005,447,9, 978,470,7, 952,507,11, 862,687,16, 906,701,8, 912,728,8, 952,756,11, 128,706,8, 184,699,7, 244,712,11, 508,715,14, 674,707,7, 753,709,9, 817,713,7, 475,748,8, 634,749,12, 786,732,10, 229,760,7, 239,812,15, 273,836,9, 375,789,11, 343,830,14, 366,870,8, 566,801,9, 598,833,16, 632,882,9, 765,778,10, 927,838,9, 1042,752,5, 1047,792,11, 1047,860,12, 1060,898,16, 1047,951,12, 1013,915,8, 1047,990,15, 649,949,6, 41,949,8, 91,949,12, 15,968,8, 408,1042,9, 375,1062,7, 792,1044,9, 768,1064,8, 824,1065,12, 1066,1028,9, 1047,1064,9]]],
  e: [
    [star, [334,59,30, 110,180,30, 199,750,38, 160,973,46, 860,735,30, 925,833,30, 976,1020,30]],
    [spark, [723,12,32, 947,500,32, 515,698,28, 30,908,30]], [drop, [588,955,18, 689,950,20, 740,963,16, 380,268,9]],
    [ring, [204,8,11, 234,33,7, 444,5,14, 414,52,14, 436,86,7, 472,62,16, 517,69,9, 539,18,10, 634,8,15, 666,30,8, 697,80,8, 667,113,7, 690,154,8, 840,115,9, 954,144,12, 990,159,9, 1027,110,18, 1051,151,9, 1036,200,9, 1055,263,9, 1028,306,15, 33,112,8, 66,115,10, 162,91,9, 171,120,6, 156,152,5, 182,209,9, 170,256,12, 571,234,13, 405,143,8, 385,126,7, 371,149,5, 448,215,8, 450,254,9, 427,268,6, 455,286,5, 797,267,7, 780,304,9, 725,314,10, 821,317,9, 852,341,9, 780,352,15, 28,386,16, 75,374,7, 922,412,6, 912,440,8, 576,520,10, 601,558,15, 650,551,6, 632,595,8, 578,597,9, 585,631,9, 588,676,11, 621,702,5, 757,535,8, 748,564,14, 983,541,10, 984,576,9, 996,643,15, 1046,640,8, 1066,664,8, 320,552,12, 187,604,10, 59,665,6, 84,700,9, 105,753,16, 139,745,8, 131,782,9, 271,740,9, 292,757,9, 490,770,9, 545,768,9, 530,798,6, 496,816,7, 516,860,13, 691,737,14, 738,740,16, 791,727,10, 794,760,7, 758,780,9, 709,784,6, 922,703,8, 933,740,16, 905,779,9, 143,892,7, 91,917,12, 62,967,8, 99,1000,8, 310,973,9, 248,996,9, 277,1017,9, 324,1014,14, 592,998,8, 868,953,9, 900,900,10, 870,913,6, 915,949,16, 926,987,8, 902,1028,8, 931,1053,7, 475,1083,8, 509,1085,9, 1072,1030,15]]],
  w: [
    [star, [913,75,30, 487,435,30, 336,620,40, 549,687,28]], [spark, [197,100,26, 498,183,34, 39,323,32]],
    [heart, [1003,170,28, 197,805,36]], [drop, [58,803,24, 113,825,28, 73,870,16]], [note, [400,525,30]],
    [ring, [11,54,9, 41,30,8, 80,42,15, 51,76,9, 78,111,8, 233,25,16, 316,56,10, 264,70,8, 291,87,6, 374,53,8, 425,14,7, 443,49,12, 479,3,7, 767,17,9, 835,22,14, 870,11,7, 921,11,7, 998,79,10, 954,128,7, 13,202,12, 31,251,7, 265,245,8, 690,160,11, 720,188,8, 753,195,8, 811,219,7, 850,234,10, 763,237,15, 735,267,10, 745,315,15, 749,366,8, 727,422,7, 933,167,10, 983,237,15, 1036,226,8, 950,269,8, 969,298,11, 1005,296,5, 1053,269,8, 1067,188,8, 1039,345,8, 1075,368,8, 1072,320,12, 22,391,9, 456,371,9, 497,373,13, 386,404,8, 421,395,8, 403,437,9, 387,475,8, 456,480,10, 267,423,11, 182,451,7, 217,459,9, 254,460,13, 163,484,11, 282,505,8, 327,541,10, 402,592,12, 422,622,7, 120,614,11, 809,430,16, 852,428,9, 838,456,7, 903,433,12, 805,481,9, 283,652,8, 317,685,12, 292,707,9, 139,675,8, 192,682,12, 185,723,16, 215,753,10, 139,765,10, 545,753,13, 532,797,16, 568,818,8, 504,828,9, 507,862,8, 851,613,9, 821,634,8, 846,650,7, 1023,611,8, 1004,648,12, 204,865,12, 21,851,8, 842,825,11, 825,871,15, 958,845,13, 1004,871,15]]],
  sw: [
    [star, [63,187,30, 179,382,30, 627,490,40, 207,945,32, 772,967,32, 411,1073,32, 82,1133,32]],
    [spark, [765,100,26, 1033,103,24, 231,767,32, 793,795,34, 725,1075,26, 560,1157,30]],
    [heart, [778,275,36, 46,675,26]], [cloud, [76,765,54, 761,715,52, 89,1017,54, 583,1070,54, 463,1200,40]], [note, [686,555,28]],
    [ring, [25,28,13, 783,19,11, 811,62,8, 993,31,8, 1020,53,10, 975,63,8, 593,68,11, 32,243,13, 43,289,9, 101,321,12, 149,327,9, 130,349,6, 743,158,8, 769,177,8, 768,207,9, 1054,200,7, 1075,155,9, 904,289,7, 903,348,11, 936,382,10, 896,393,16, 477,404,12, 489,436,8, 534,443,14, 552,479,8, 519,497,14, 480,495,9, 437,500,13, 384,511,20, 396,556,8, 437,563,12, 485,592,9, 514,631,8, 596,637,8, 494,663,15, 660,333,10, 636,356,8, 682,361,9, 648,441,8, 699,451,15, 758,422,8, 168,454,10, 199,468,8, 242,469,6, 146,491,10, 35,531,7, 66,532,7, 52,582,15, 14,611,8, 63,631,8, 104,637,8, 158,654,16, 102,683,8, 128,712,12, 172,714,12, 15,721,15, 292,735,9, 328,727,12, 366,731,8, 838,760,8, 873,797,12, 1023,531,10, 1057,506,9, 1061,549,7, 1016,622,6, 1007,664,11, 1040,682,9, 1051,755,18, 1045,801,8, 1060,844,8, 1028,883,16, 988,893,9, 1007,923,7, 1067,912,8, 261,820,12, 225,860,7, 283,870,12, 246,889,7, 325,890,7, 62,952,8, 120,948,14, 272,939,8, 353,961,16, 431,961,11, 575,907,11, 573,951,10, 626,974,8, 683,970,14, 661,1013,8, 596,1003,7, 726,1012,7, 797,1018,8, 783,1057,7, 835,962,7, 868,1002,10, 915,983,16, 978,968,9, 918,1037,8, 170,1001,10, 256,1000,10, 308,997,15, 388,1000,8, 349,1032,12, 318,1067,9, 464,1039,11, 469,1101,9, 496,1127,11, 36,1088,8, 160,1137,11, 243,1135,8, 277,1127,6, 328,1119,15, 360,1144,8, 409,1146,12, 365,1187,15, 631,1166,8, 750,1139,14, 793,1115,9, 852,1144,9, 796,1160,8, 952,1106,15, 1002,1098,8, 963,1060,7, 1052,1102,9, 1053,1141,10, 930,906,8, 138,1189,8, 25,1190,18, 196,1182,7]]],
  se: [
    [star, [951,500,28, 634,771,30, 958,731,28, 338,1122,34, 603,1077,32, 775,1172,34]],
    [spark, [427,37,32, 880,190,24, 325,627,24, 275,1020,32, 603,1185,30]],
    [heart, [382,1045,25, 1055,440,26]], [cloud, [875,885,54, 1016,1060,58, 483,1082,54]], [drop, [817,815,24, 977,1122,9, 1017,1132,9, 1055,1125,9]],
    [ring, [128,90,14, 139,138,8, 241,146,9, 185,186,9, 237,183,8, 203,222,14, 416,202,7, 417,133,16, 368,57,7, 386,94,9, 392,249,13, 302,269,7, 513,271,11, 28,284,8, 34,328,9, 69,325,11, 113,309,13, 166,301,9, 19,357,7, 234,382,6, 260,413,13, 521,324,6, 520,365,8, 557,361,9, 559,402,7, 302,454,7, 358,469,14, 351,507,7, 378,434,9, 416,433,10, 9,481,9, 16,534,15, 53,540,6, 543,535,8, 567,509,7, 602,530,11, 631,521,7, 537,569,7, 730,411,9, 773,160,9, 817,148,15, 899,94,8, 906,125,12, 937,117,9, 968,111,7, 1000,133,14, 945,169,12, 1028,159,7, 1050,114,15, 1046,200,9, 880,258,8, 872,297,11, 905,306,7, 852,327,6, 946,341,8, 1049,332,12, 959,382,14, 1005,405,12, 1040,382,9, 973,438,9, 1010,494,10, 959,556,12, 791,607,8, 738,632,16, 704,655,12, 793,653,7, 869,646,7, 905,606,9, 948,614,8, 953,669,15, 989,673,8, 1061,667,7, 336,687,13, 564,687,7, 586,714,9, 676,720,9, 134,772,9, 171,783,7, 219,760,11, 251,748,8, 14,803,12, 107,818,15, 150,839,12, 131,872,8, 168,895,8, 378,872,16, 528,872,9, 771,864,14, 787,901,9, 914,822,13, 896,779,8, 937,790,7, 108,920,15, 148,930,7, 224,917,14, 277,936,9, 251,962,8, 329,932,7, 473,905,8, 516,919,11, 493,950,8, 513,989,10, 570,976,12, 615,984,8, 664,1004,12, 708,977,14, 763,979,8, 818,958,18, 984,927,15, 1036,907,8, 1061,941,12, 1014,977,16, 973,998,9, 1058,991,9, 58,1001,16, 118,991,13, 163,989,12, 221,993,8, 323,974,9, 22,978,6, 86,967,5, 438,1019,7, 544,1038,15, 580,1020,6, 637,1039,7, 714,1049,10, 673,1077,6, 726,1107,12, 756,1068,8, 779,1101,7, 637,1126,15, 560,1123,9, 408,1122,8, 270,1099,11, 18,1125,8, 35,1084,5, 42,1154,12, 84,1170,8, 251,1155,8, 285,1172,7, 706,1143,7, 663,1154,8, 876,1131,8, 912,1147,12, 857,1155,8, 869,1184,9, 933,1102,7, 924,1030,8, 1020,1176,12, 1062,1163,8, 332,1198,14, 380,1190,11]]]
};

for (const [id, sets] of Object.entries(motifs)) {
  const group = document.getElementById(id);
  for (const [shape, list] of sets) {
    let d = "";
    for (let i = 0; i < list.length; i += 3) d += shape(list[i], list[i + 1], list[i + 2]);
    const path = document.createElementNS(NS, "path");
    path.setAttribute("d", d);
    group.appendChild(path);
  }
}
```
